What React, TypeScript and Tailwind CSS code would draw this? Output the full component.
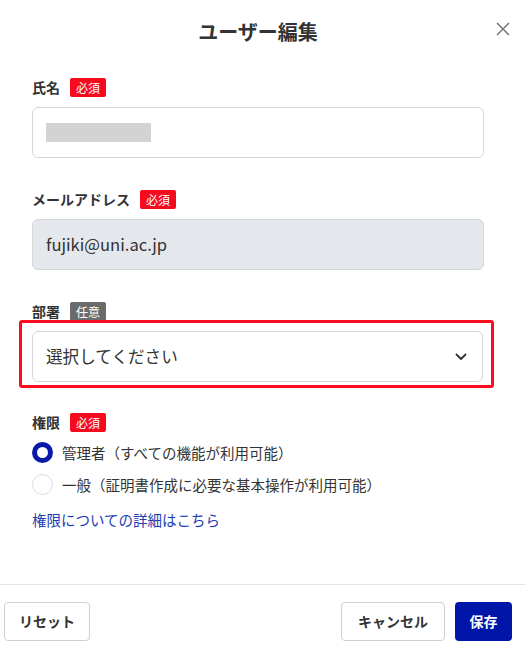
import React from "react";

const font = {
  fontFamily: '"Noto Sans CJK JP", "Noto Sans", sans-serif',
};

function Badge({ kind }: { kind: "req" | "opt" }) {
  return kind === "req" ? (
    <span className="inline-flex h-[19px] items-center rounded-[2px] bg-[#f50a1e] px-[6px] text-[12px] leading-[19px] text-white">
      必須
    </span>
  ) : (
    <span className="inline-flex h-[19px] items-center rounded-[2px] bg-[#6b6b6b] px-[6px] text-[12px] leading-[19px] text-white">
      任意
    </span>
  );
}

function Label({ text, kind }: { text: string; kind: "req" | "opt" }) {
  return (
    <div className="flex h-[19px] items-center gap-[10px]">
      <span className="text-[14px] font-bold leading-[19px] text-[#333]">{text}</span>
      <Badge kind={kind} />
    </div>
  );
}

export default function App() {
  return (
    <div className="relative h-[657px] w-[525px] overflow-hidden bg-white" style={font}>
      <div className="w-[516px]">
        <div className="relative flex h-[64px] items-center justify-center">
          <h1 className="text-[20px] font-bold leading-[28px] text-[#333]">ユーザー編集</h1>
          <svg
            className="absolute left-[496px] top-[22px]"
            width="14"
            height="14"
            viewBox="0 0 14 14"
          >
            <path d="M1 1L13 13M13 1L1 13" stroke="#777" strokeWidth="1.5" fill="none" />
          </svg>
        </div>

        <div className="px-[32px] pt-[14px]">
          <Label text="氏名" kind="req" />
          <div className="mt-[10px] flex h-[51px] w-[452px] items-center rounded-[6px] border border-[#d6d6d6] bg-white px-[13px]">
            <div className="h-[19px] w-[105px] bg-[#d3d3d3]" />
          </div>

          <div className="mt-[32px]">
            <Label text="メールアドレス" kind="req" />
          </div>
          <div className="mt-[10px] flex h-[51px] w-[452px] items-center rounded-[6px] border border-[#d6d6d6] bg-[#e4e8ec] px-[13px] text-[16.6px] text-[#333]">
            fujiki@uni.ac.jp
          </div>

          <div className="mt-[32px]">
            <Label text="部署" kind="opt" />
          </div>
          <div className="mt-[10px] flex h-[51px] w-[451px] items-center justify-between rounded-[6px] border border-[#d6d6d6] bg-white pl-[13px] pr-[15px] text-[16.6px] text-[#333]">
            <span>選択してください</span>
            <svg width="12" height="8" viewBox="0 0 12 8">
              <path d="M1.5 1.5L6 6L10.5 1.5" stroke="#333" strokeWidth="1.8" fill="none" strokeLinecap="round" strokeLinejoin="round" />
            </svg>
          </div>

          <div className="mt-[31px]">
            <Label text="権限" kind="req" />
          </div>
          <div className="mt-[10px] flex flex-col gap-[11px]">
            <div className="flex h-[21px] items-center gap-[9px]">
              <span className="box-border h-[21px] w-[21px] rounded-full border-[5px] border-[#0a1aa8] bg-white" />
              <span className="text-[14.5px] text-[#333]">管理者（すべての機能が利用可能）</span>
            </div>
            <div className="flex h-[21px] items-center gap-[9px]">
              <span className="box-border h-[21px] w-[21px] rounded-full border border-[#dcdcdc] bg-white" />
              <span className="text-[14.5px] text-[#333]">一般（証明書作成に必要な基本操作が利用可能）</span>
            </div>
          </div>
          <div className="mt-[15px] text-[14.5px] leading-[20px] text-[#1a3db5]">権限についての詳細はこちら</div>
        </div>
      </div>

      <div className="mt-[54px] h-px w-[525px] bg-[#e2e4e8]" />
      <div className="flex w-[516px] items-center justify-between px-[4px] pt-[17px]">
        <button className="h-[39px] w-[86px] rounded-[4px] border border-[#d0d0d0] bg-white text-[14px] font-bold text-[#333]">
          リセット
        </button>
        <div className="flex items-center gap-[10px]">
          <button className="h-[39px] w-[104px] rounded-[4px] border border-[#d0d0d0] bg-white text-[14px] font-bold text-[#333]">
            キャンセル
          </button>
          <button className="h-[39px] w-[57px] rounded-[4px] bg-[#0016a8] text-[14px] font-bold text-white">
            保存
          </button>
        </div>
      </div>

      <div className="pointer-events-none absolute left-[19px] top-[320px] h-[68px] w-[475px] rounded-[3px] border-[3px] border-[#ff0a1e]" />
    </div>
  );
}
